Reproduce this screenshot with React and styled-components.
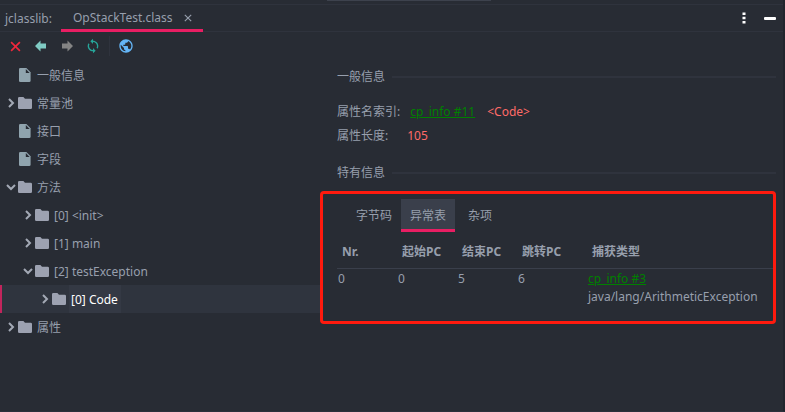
import React, { Fragment } from 'react'
import styled, { createGlobalStyle } from 'styled-components'
import { MdPublic, MdSync } from 'react-icons/md'

const GlobalStyle = createGlobalStyle`
    * {
        box-sizing: border-box;
    }
    body {
        margin: 0;
        background: #282c34;
        color: #979fad;
        font-family: "Noto Sans", "Noto Sans CJK SC", sans-serif;
        font-size: 12px;
        line-height: 18px;
    }
    button {
        padding: 0;
        border: 0;
        background: none;
        color: inherit;
        font: inherit;
    }
    svg {
        display: block;
    }
`

const Window = styled.div`
    display: flex;
    flex-direction: column;
    min-height: 100vh;
    border-right: 2px solid #21252d;
    border-bottom: 1px solid #2c313c;
`

const TopEdge = styled.div`
    display: flex;
    justify-content: center;
    height: 5px;
    padding-left: 35px;
    border-bottom: 1px solid #2f333d;
`

const TopEdgeBar = styled.div`
    width: 22%;
    height: 1px;
    background: #3d424d;
`

const TitleBar = styled.header`
    display: flex;
    align-items: stretch;
    height: 27px;
    padding: 0 7px 0 5px;
    border-bottom: 1px solid #2f333d;
`

const ToolName = styled.span`
    width: 56px;
    line-height: 28px;
`

const FileTab = styled.div`
    display: flex;
    align-items: center;
    gap: 11px;
    height: 27px;
    padding: 1px 11px 0 12px;
    border-bottom: 3px solid #e91e63;
    line-height: 24px;
`

const WindowButtons = styled.div`
    display: flex;
    align-items: center;
    gap: 18px;
    margin-left: auto;
    color: #ffffff;
`

const Toolbar = styled.div`
    display: flex;
    align-items: center;
    gap: 10px;
    height: 29px;
    padding: 0 0 1px 7px;
`

const ToolButton = styled.button`
    display: grid;
    place-items: center;
    width: 16px;
    height: 16px;
    color: ${props => props.$color};
`

const Divider = styled.span`
    width: 1px;
    height: 20px;
    margin: 0 -2px 0 -2px;
    background: #2f333d;
`

const Body = styled.div`
    display: flex;
    flex: 1;
`

const Tree = styled.nav`
    flex: 0 0 320px;
`

const TreeRow = styled.div`
    display: flex;
    align-items: center;
    height: 28px;
    padding-left: ${props => 5 + props.$level * 17}px;
    background: ${props => props.$selected ? '#2f343e' : 'none'};
    box-shadow: ${props => props.$selected ? 'inset 2px 0 #c2255c' : 'none'};
`

const Toggle = styled.button`
    width: 12px;
    height: 12px;
    margin-right: 1px;
    color: #a3a9b5;
`

const Spacer = styled.span`
    width: 13px;
`

const TreeLabel = styled.span`
    padding: 2px 3px 0 2px;
    margin-left: 3px;
    line-height: 26px;
    white-space: pre;
    color: ${props => props.$selected ? '#ffffff' : 'inherit'};
    background: ${props => props.$selected ? '#343944' : 'none'};
`

const Detail = styled.main`
    flex: 1;
    min-width: 0;
    padding: 7px 7px 0 0;
`

const SectionTitle = styled.h2`
    display: flex;
    align-items: center;
    gap: 7px;
    margin: 0 0 0 17px;
    font-size: 12px;
    font-weight: normal;

    &::after {
        content: "";
        flex: 1;
        height: 2px;
        background: #2f333d;
    }
`

const Attributes = styled.dl`
    display: flex;
    flex-direction: column;
    gap: 6px;
    margin: 17px 0 19px 17px;
`

const AttributeLine = styled.div`
    display: flex;
    gap: ${props => props.$gap}px;

    dd {
        display: flex;
        gap: 12px;
        margin: 0;
    }
`

const Value = styled.span`
    color: #ff6b68;
`

const InfoLink = styled.a`
    color: #008000;
    text-decoration: underline;
`

const Highlight = styled.section`
    margin-top: 9px;
    min-height: 133px;
    padding: 5px 0 0 14px;
    border: 3px solid #ff1a0e;
    border-radius: 4px;
`

const Tabs = styled.div`
    display: flex;
    padding-left: 10px;
`

const Tab = styled.button`
    min-width: 50px;
    height: 33px;
    padding: 4px 9px 0;
    border-bottom: 3px solid ${props => props.$active ? '#e91e63' : 'transparent'};
    background: ${props => props.$active ? '#3a3f4b' : 'none'};
`

const Table = styled.table`
    width: 100%;
    border-collapse: collapse;
    table-layout: fixed;

    th {
        height: 36px;
        padding: 4px 0 0 5px;
        border-bottom: 1px solid #3a3f4b;
        text-align: left;
    }
    td {
        padding: 1px 0 0 1px;
        vertical-align: top;
    }
`

const Col = styled.col`
    width: ${props => props.$width ? `${props.$width}px` : 'auto'};
`

const Close = ({ size, width }) => (
    <svg width={size} height={size} viewBox="0 0 10 10" stroke="currentColor" strokeWidth={width}>
        <path d="M1 1 9 9M9 1 1 9" />
    </svg>
)

const Arrow = ({ flip }) => (
    <svg width="12" height="12" viewBox="0 0 12 12" fill="currentColor">
        <path d={flip ? 'M12 6 6.5 .5V3.5H1V8.5H6.5V11.5Z' : 'M0 6 5.5 .5V3.5H11V8.5H5.5V11.5Z'} />
    </svg>
)

const Chevron = ({ open }) => (
    <svg width="12" height="12" viewBox="0 0 12 12" fill="none" stroke="currentColor" strokeWidth="2">
        <path d={open ? 'M2 4 6 8 10 4' : 'M4 2 8 6 4 10'} />
    </svg>
)

const FolderIcon = () => (
    <svg width="14" height="12" viewBox="0 0 14 12" fill="#9da2b1">
        <path d="M1.3 0H5.4L7 1.7H12.7Q14 1.7 14 3V10.7Q14 12 12.7 12H1.3Q0 12 0 10.7V1.3Q0 0 1.3 0Z" />
    </svg>
)

const FileIcon = () => (
    <svg width="14" height="14" viewBox="0 0 14 14">
        <path fill="#90a4ae" d="M2.3 0H8.4L12.6 4.3V12.7Q12.6 14 11.3 14H2.3Q1 14 1 12.7V1.3Q1 0 2.3 0Z" />
        <path fill="#282c34" d="M7.8 1V4.9H11.7Z" />
    </svg>
)

const nodes = [
    { label: '一般信息', level: 0 },
    { label: '常量池', level: 0, folder: true },
    { label: '接口', level: 0 },
    { label: '字段', level: 0 },
    { label: '方法', level: 0, folder: true, open: true },
    { label: '[0] <init>', level: 1, folder: true },
    { label: '[1] main', level: 1, folder: true },
    { label: '[2] testException', level: 1, folder: true, open: true },
    { label: '[0] Code', level: 2, folder: true, selected: true },
    { label: '属性', level: 0, folder: true }
]

const tabs = ['字节码', '异常表', '杂项']

const ClassTree = () => (
    <Tree aria-label="class">
        {nodes.map(({ label, level, folder, open, selected }, key) => (
            <TreeRow key={key} $level={level} $selected={selected}>
                {folder
                    ? <Fragment>
                        <Toggle aria-label={label} aria-expanded={!!open}><Chevron open={open} /></Toggle>
                        <FolderIcon />
                    </Fragment>
                    : <Fragment><Spacer /><FileIcon /></Fragment>}
                <TreeLabel $selected={selected}>{label}</TreeLabel>
            </TreeRow>
        ))}
    </Tree>
)

const ExceptionTable = () => (
    <Table>
        <colgroup>
            <Col $width={60} />
            <Col $width={60} />
            <Col $width={60} />
            <Col $width={70} />
            <Col />
        </colgroup>
        <thead>
            <tr>
                <th>Nr.</th>
                <th>起始PC</th>
                <th>结束PC</th>
                <th>跳转PC</th>
                <th>捕获类型</th>
            </tr>
        </thead>
        <tbody>
            <tr>
                <td>0</td>
                <td>0</td>
                <td>5</td>
                <td>6</td>
                <td><InfoLink href="#3">cp_info #3</InfoLink><br />java/lang/ArithmeticException</td>
            </tr>
        </tbody>
    </Table>
)

const App = () => (
    <Window>
        <GlobalStyle />
        <TopEdge><TopEdgeBar /></TopEdge>
        <TitleBar>
            <ToolName>jclasslib:</ToolName>
            <FileTab>
                OpStackTest.class
                <button aria-label="close tab"><Close size={8} width={1.4} /></button>
            </FileTab>
            <WindowButtons>
                <button aria-label="options">
                    <svg width="4" height="12" viewBox="0 0 4 12" fill="currentColor">
                        <path d="M.5 .5H3.5V3H.5ZM.5 4.7H3.5V7.2H.5ZM.5 9H3.5V11.5H.5Z" />
                    </svg>
                </button>
                <button aria-label="hide">
                    <svg width="12" height="3" viewBox="0 0 12 3" fill="currentColor">
                        <rect width="12" height="3" rx="1" />
                    </svg>
                </button>
            </WindowButtons>
        </TitleBar>
        <Toolbar>
            <ToolButton aria-label="close" $color="#f0283c"><Close size={11} width={1.5} /></ToolButton>
            <ToolButton aria-label="back" $color="#80cbc4"><Arrow /></ToolButton>
            <ToolButton aria-label="forward" $color="#848484"><Arrow flip /></ToolButton>
            <ToolButton aria-label="reload" $color="#26a69a"><MdSync size={16} /></ToolButton>
            <Divider />
            <ToolButton aria-label="web" $color="#64b5f6"><MdPublic size={16} /></ToolButton>
        </Toolbar>
        <Body>
            <ClassTree />
            <Detail>
                <SectionTitle>一般信息</SectionTitle>
                <Attributes>
                    <AttributeLine $gap={10}>
                        <dt>属性名索引:</dt>
                        <dd><InfoLink href="#11">cp_info #11</InfoLink><Value>&lt;Code&gt;</Value></dd>
                    </AttributeLine>
                    <AttributeLine $gap={19}>
                        <dt>属性长度:</dt>
                        <dd><Value>105</Value></dd>
                    </AttributeLine>
                </Attributes>
                <SectionTitle>特有信息</SectionTitle>
                <Highlight>
                    <Tabs role="tablist">
                        {tabs.map(name => (
                            <Tab key={name} role="tab" aria-selected={name === '异常表'} $active={name === '异常表'}>{name}</Tab>
                        ))}
                    </Tabs>
                    <ExceptionTable />
                </Highlight>
            </Detail>
        </Body>
    </Window>
)

export default App
